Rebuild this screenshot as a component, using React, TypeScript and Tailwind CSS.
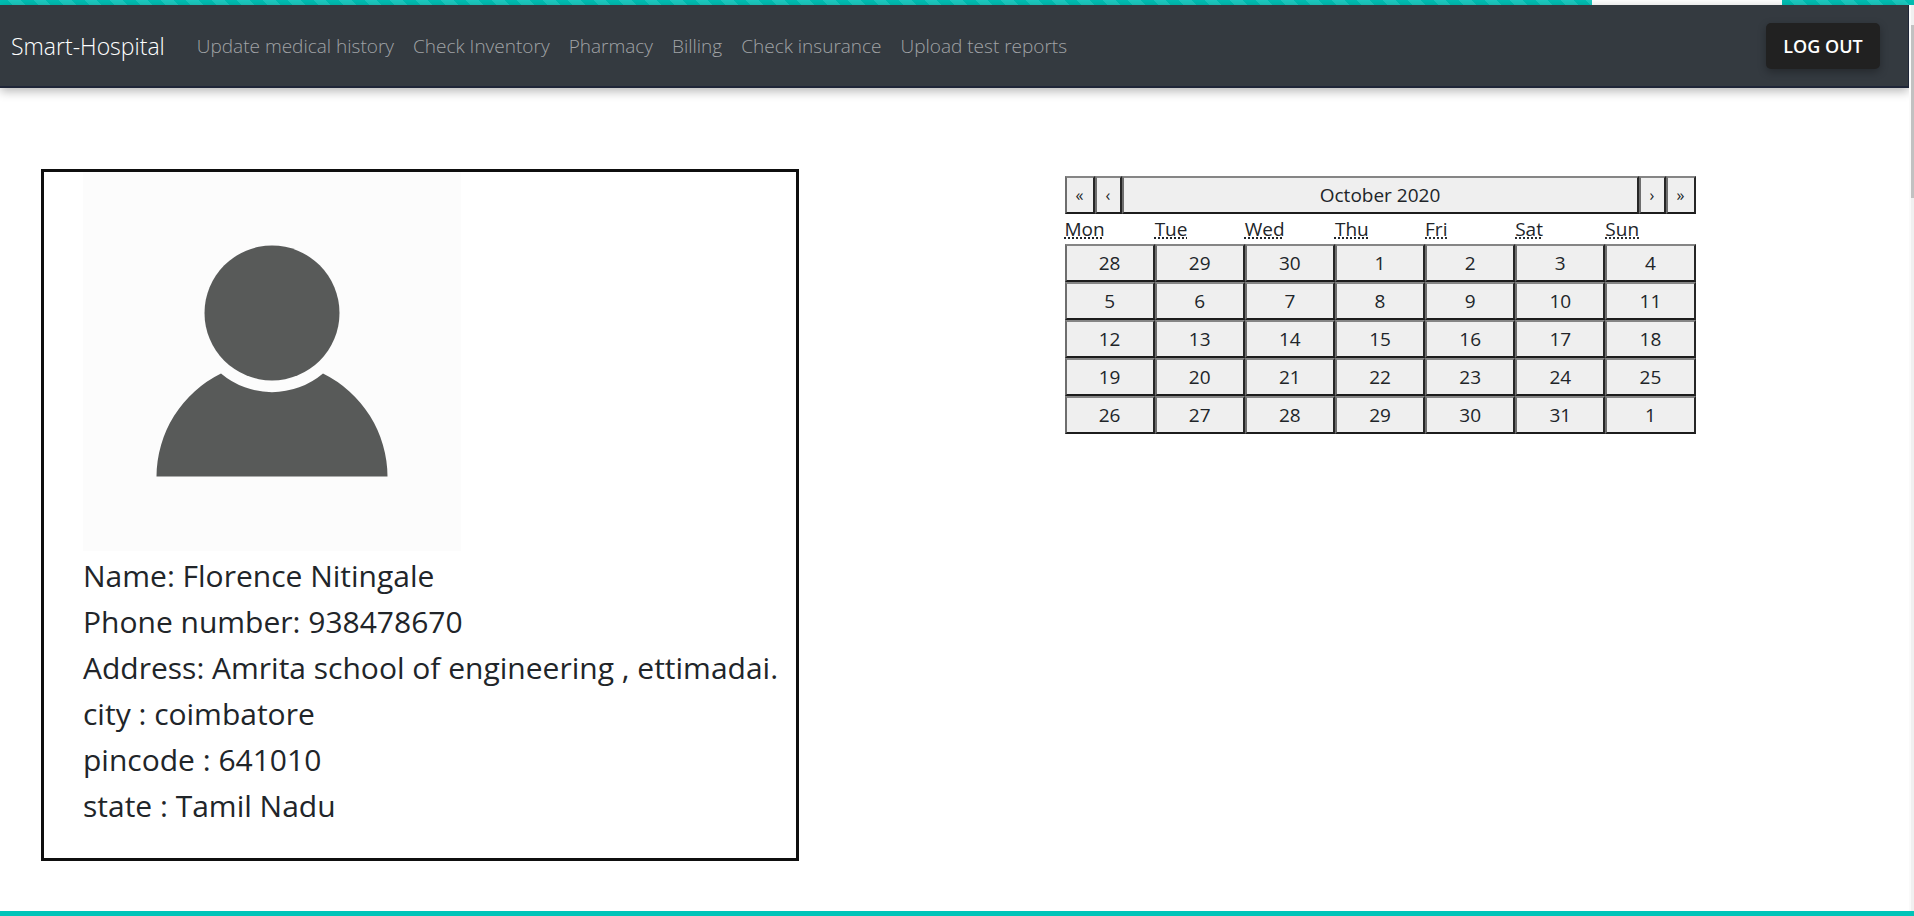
const links = [
  'Update medical history',
  'Check Inventory',
  'Pharmacy',
  'Billing',
  'Check insurance',
  'Upload test reports',
];

const details = [
  'Name: Florence Nitingale',
  'Phone number: 938478670',
  'Address: Amrita school of engineering , ettimadai.',
  'city : coimbatore',
  'pincode : 641010',
  'state : Tamil Nadu',
];

const weekdays = [
  ['Mon', 'Monday'],
  ['Tue', 'Tuesday'],
  ['Wed', 'Wednesday'],
  ['Thu', 'Thursday'],
  ['Fri', 'Friday'],
  ['Sat', 'Saturday'],
  ['Sun', 'Sunday'],
];

const weeks = [
  [28, 29, 30, 1, 2, 3, 4],
  [5, 6, 7, 8, 9, 10, 11],
  [12, 13, 14, 15, 16, 17, 18],
  [19, 20, 21, 22, 23, 24, 25],
  [26, 27, 28, 29, 30, 31, 1],
];

const bevel =
  'border-2 border-t-[#858585] border-l-[#6e6e6e] border-r-[#262626] border-b-[#1c1c1c] bg-[#efefef] text-[#212529]';

function NavBar() {
  return (
    <nav className="flex items-center border-r border-b-2 border-[#1f2638] bg-[#343a40] pt-[18px] pr-7 pb-[17px] pl-[11px] font-light shadow-[0_3px_10px_rgba(0,0,0,0.3)]">
      <a href="#home" className="mr-8 text-[23px] leading-[46px] text-white">
        Smart-Hospital
      </a>
      <ul className="flex gap-[19px]">
        {links.map((label) => (
          <li key={label}>
            <a href="#section" className="text-[19px] leading-[46px] text-[#a0a3a6]">
              {label}
            </a>
          </li>
        ))}
      </ul>
      <button
        type="button"
        className="ml-auto h-[46px] w-[114px] rounded-[5px] bg-[#212121] text-lg font-semibold text-white shadow-[0_3px_8px_rgba(0,0,0,0.3)]"
      >
        LOG OUT
      </button>
    </nav>
  );
}

function ProfileCard() {
  return (
    <section className="w-[758px] max-w-full border-3 border-[#0f0f0f] pb-[29px] pl-[39px]">
      <svg viewBox="0 0 378 379" className="block h-[379px] w-[378px] bg-[#fcfcfc]" role="img" aria-label="Profile">
        <circle cx="189" cy="141" r="67.5" fill="#585a59" />
        <path d="M73.5 304.5A115.5 115.5 0 0 1 138 201.5A79 79 0 0 0 240 201.5A115.5 115.5 0 0 1 304.5 304.5Z" fill="#585a59" />
      </svg>
      <div className="pt-0.5 text-[30px] leading-[46px] whitespace-nowrap text-[#212529]">
        {details.map((line) => (
          <p key={line}>{line}</p>
        ))}
      </div>
    </section>
  );
}

function Calendar() {
  return (
    <section className="w-[631px] max-w-full pt-[7px] text-[19px] text-[#212529]">
      <div className="flex h-[38px]">
        <button type="button" className={`w-[30px] text-base ${bevel}`}>«</button>
        <button type="button" className={`w-[27px] text-base ${bevel}`}>‹</button>
        <button type="button" className={`flex-1 ${bevel}`}>October 2020</button>
        <button type="button" className={`w-[27px] text-base ${bevel}`}>›</button>
        <button type="button" className={`w-[30px] text-base ${bevel}`}>»</button>
      </div>
      <table className="w-full table-fixed border-collapse">
        <thead>
          <tr>
            {weekdays.map(([short, full]) => (
              <th key={short} scope="col" className="h-[30px] p-0 text-left align-middle font-normal">
                <abbr title={full} className="underline decoration-dotted underline-offset-2">
                  {short}
                </abbr>
              </th>
            ))}
          </tr>
        </thead>
        <tbody>
          {weeks.map((week) => (
            <tr key={week[0]}>
              {week.map((day) => (
                <td key={day} className="p-0">
                  <button type="button" className={`block h-[38px] w-full ${bevel}`}>
                    {day}
                  </button>
                </td>
              ))}
            </tr>
          ))}
        </tbody>
      </table>
    </section>
  );
}

export default function App() {
  return (
    <div className="flex min-h-screen flex-col bg-white font-['Open_Sans','Noto_Sans',sans-serif]">
      <div className="flex h-[5px] bg-[repeating-linear-gradient(45deg,#00bfb3_0_9px,#1ccbc1_9px_18px)]">
        <div className="ml-auto w-[190px] bg-white" />
        <div className="w-[132px]" />
      </div>
      <div className="flex flex-1">
        <div className="min-w-0 flex-1">
          <NavBar />
          <main className="grid grid-cols-2 items-start pt-[81px]">
            <div className="pl-[41px]">
              <ProfileCard />
            </div>
            <div className="pl-[110px]">
              <Calendar />
            </div>
          </main>
        </div>
        <div className="w-[5px] border-l-2 border-[#fafafa] bg-[#f0f0f0] pt-5">
          <div className="h-[173px] bg-[#c1c1c1]" />
        </div>
      </div>
      <div className="h-[5px] bg-[#00c4b8]" />
    </div>
  );
}
